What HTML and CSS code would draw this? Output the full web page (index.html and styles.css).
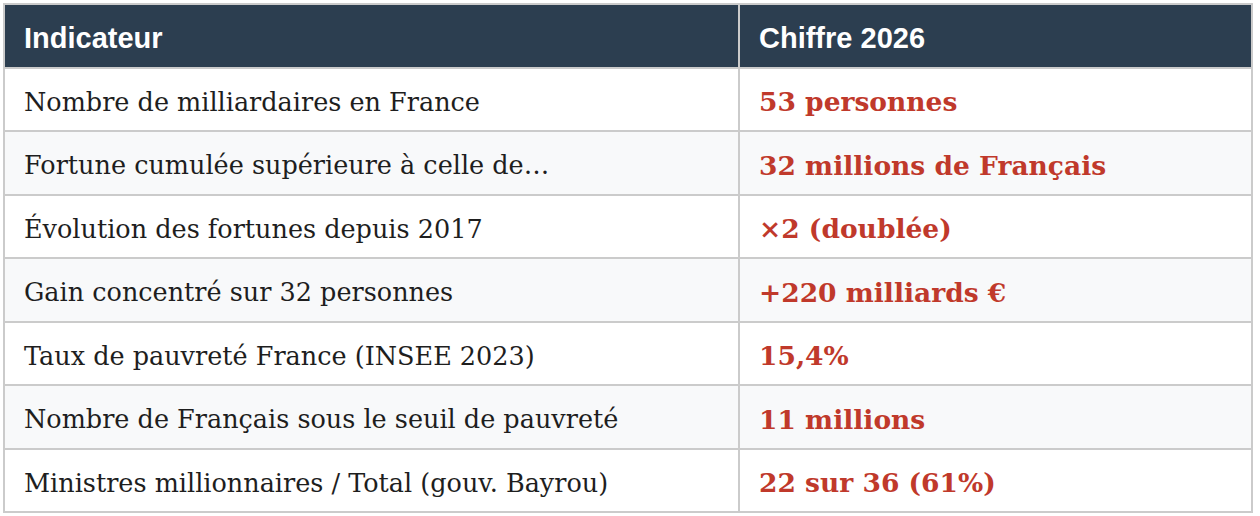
FILE: index.html
```html
<!DOCTYPE html>
<html lang="fr">
<head>
<meta charset="utf-8">
<title>Indicateurs 2026</title>
<link rel="stylesheet" href="styles.css">
</head>
<body>
<table class="stats">
  <thead>
    <tr><th class="col-label">Indicateur</th><th class="col-value">Chiffre 2026</th></tr>
  </thead>
  <tbody>
    <tr><td>Nombre de milliardaires en France</td><td class="value">53 personnes</td></tr>
    <tr><td>Fortune cumulée supérieure à celle de…</td><td class="value">32 millions de Français</td></tr>
    <tr><td>Évolution des fortunes depuis 2017</td><td class="value">×2 (doublée)</td></tr>
    <tr><td>Gain concentré sur 32 personnes</td><td class="value">+220 milliards €</td></tr>
    <tr><td>Taux de pauvreté France (INSEE 2023)</td><td class="value">15,4%</td></tr>
    <tr><td>Nombre de Français sous le seuil de pauvreté</td><td class="value">11 millions</td></tr>
    <tr><td>Ministres millionnaires / Total (gouv. Bayrou)</td><td class="value">22 sur 36 (61%)</td></tr>
  </tbody>
</table>
</body>
</html>
```
FILE: styles.css
```css
html, body {
  margin: 0;
  padding: 0;
  background: #ffffff;
}
body {
  padding: 3px;
}
.stats {
  border-collapse: collapse;
  width: 1250px;
  table-layout: fixed;
}
.stats th,
.stats td {
  box-sizing: border-box;
  border: 2px solid #cbcbcb;
  padding: 6px 19px 0;
  height: 63.5px;
  text-align: left;
  vertical-align: middle;
  line-height: 1.2;
}
.stats .col-label { width: 735px; }
.stats th {
  background: #2c3e50;
  color: #ffffff;
  font-family: "Liberation Sans", Arial, sans-serif;
  font-weight: 700;
  font-size: 29px;
  padding-top: 5px;
}
.stats td {
  font-family: "DejaVu Serif", Georgia, serif;
  font-size: 25.5px;
  color: #1e1e1e;
}
.stats tbody tr:nth-child(even) td {
  background: #f8f9fa;
}
.stats td.value {
  color: #c0392b;
  font-weight: 700;
  font-size: 26.5px;
}
```
